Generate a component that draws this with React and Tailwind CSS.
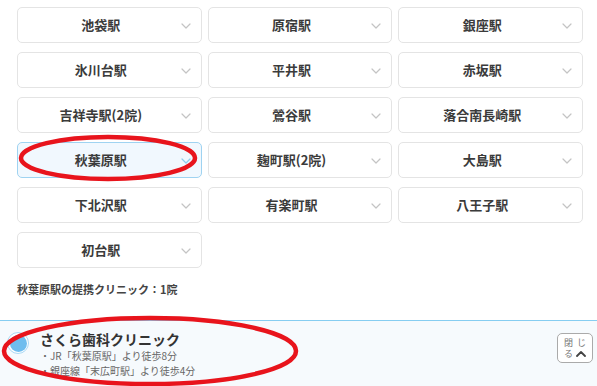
import React from 'react';

const stations = [
  { name: '池袋駅' },
  { name: '原宿駅' },
  { name: '銀座駅' },
  { name: '氷川台駅' },
  { name: '平井駅' },
  { name: '赤坂駅' },
  { name: '吉祥寺駅(2院)' },
  { name: '鶯谷駅' },
  { name: '落合南長崎駅' },
  { name: '秋葉原駅', active: true },
  { name: '麹町駅(2院)' },
  { name: '大島駅' },
  { name: '下北沢駅' },
  { name: '有楽町駅' },
  { name: '八王子駅' },
  { name: '初台駅' },
];

const Chevron = ({ className }) => (
  <svg viewBox="0 0 10 6" className={className} fill="none">
    <path d="M1 1l4 4 4-4" stroke="currentColor" strokeWidth="1.2" strokeLinecap="round" strokeLinejoin="round" />
  </svg>
);

const StationButton = ({ name, active }) => (
  <button
    className={`relative h-[36px] rounded-[5px] border pl-[12px] pr-[29px] text-[13px] font-bold text-[#3b3b3b] ${
      active ? 'border-[#9fd3f1] bg-[#f1f8fe]' : 'border-[#e4e4e4] bg-white'
    }`}
  >
    {name}
    <Chevron
      className={`absolute right-[10px] top-[15px] w-[10px] h-[6px] ${active ? 'text-[#8ecbee]' : 'text-[#c4c4c4]'}`}
    />
  </button>
);

export default function App() {
  return (
    <div
      className="relative w-[597px] h-[386px] overflow-hidden bg-white"
      style={{ fontFamily: '"Noto Sans CJK JP", "Noto Sans", sans-serif' }}
    >
      <div className="pl-[17px] pt-[7px]">
        <div className="grid w-[566px] grid-cols-3 gap-x-[6px] gap-y-[9px]">
          {stations.map((s) => (
            <StationButton key={s.name} {...s} />
          ))}
        </div>
        <p className="mt-[13px] text-[11px] font-bold leading-[16px] text-[#444]">
          秋葉原駅の提携クリニック：1院
        </p>
      </div>

      {/* clinic panel */}
      <div className="mt-[23px] flex h-[70px] items-start border-t-[1.5px] border-[#86cdf1] bg-[#f6fafd] pl-[7px] pr-[4px] pt-[10px]">
        <div className="mt-[1px] flex h-[22px] w-[22px] shrink-0 items-center justify-center rounded-full border border-[#a9d9f5] bg-white">
          <div className="h-[17px] w-[17px] rounded-full bg-[#6fbdee]" />
        </div>
        <div className="ml-[11px] flex-1">
          <h3 className="text-[14px] font-bold leading-[17px] text-[#333]">さくら歯科クリニック</h3>
          <p className="text-[10px] leading-[15px] text-[#666]">・JR「秋葉原駅」より徒歩8分</p>
          <p className="text-[10px] leading-[15px] text-[#666]">・銀座線「末広町駅」より徒歩4分</p>
        </div>
        <button className="mt-[2px] flex h-[30px] w-[36px] flex-col justify-center gap-[1px] rounded-[5px] border border-[#aaa] bg-white pl-[6px] text-[9px] leading-[10px] text-[#777]">
          <span className="flex gap-[4px]">
            <span>閉</span>
            <span>じ</span>
          </span>
          <span className="flex items-center gap-[3px]">
            <span>る</span>
            <svg viewBox="0 0 10 6" className="h-[6px] w-[10px] text-[#444]" fill="none">
              <path d="M1 5l4-4 4 4" stroke="currentColor" strokeWidth="1.8" strokeLinecap="round" strokeLinejoin="round" />
            </svg>
          </span>
        </button>
      </div>

      {/* annotation ellipses */}
      <svg className="pointer-events-none absolute inset-0" width="597" height="386">
        <ellipse cx="108" cy="158" rx="87" ry="21" fill="none" stroke="#e8141c" strokeWidth="4.5" />
        <ellipse cx="150" cy="351" rx="146" ry="33" fill="none" stroke="#e8141c" strokeWidth="4.5" />
      </svg>
    </div>
  );
}
